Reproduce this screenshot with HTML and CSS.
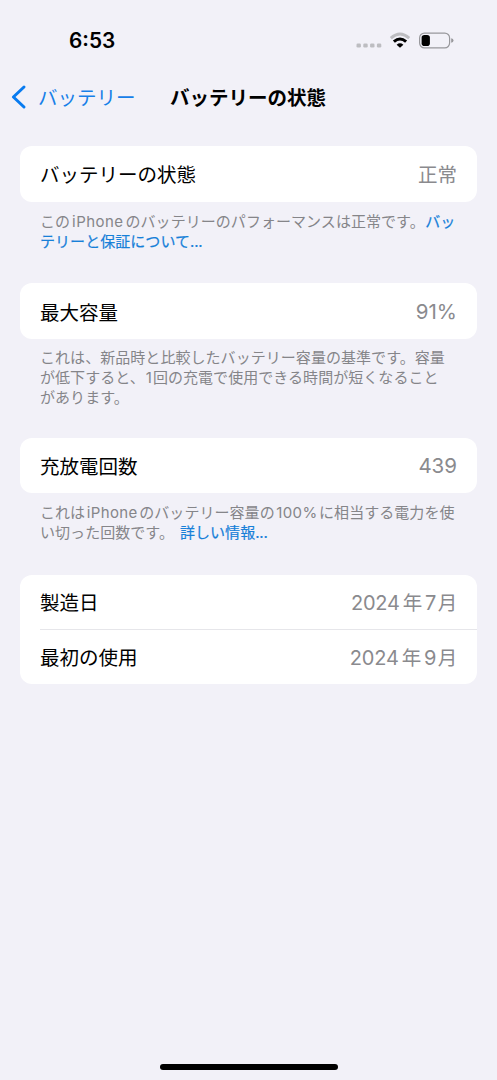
FILE: index.html
```html
<!DOCTYPE html>
<html lang="ja">
<head>
<meta charset="utf-8">
<title>バッテリーの状態</title>
<link rel="stylesheet" href="styles.css">
</head>
<body>
<div class="screen">
  <header class="status">
    <span class="clock">6:53</span>
    <svg class="indicators" width="98" height="20" viewBox="0 0 98 20">
      <g fill="#bdbdc1"><rect x="0.5" y="13.5" width="4.4" height="4" rx="1.3"/><rect x="7.3" y="13.5" width="4.4" height="4" rx="1.3"/><rect x="14.1" y="13.5" width="4.4" height="4" rx="1.3"/><rect x="20.9" y="13.5" width="4.4" height="4" rx="1.3"/></g>
      <path d="M34.8 8.1Q44 -0.1 53.2 8.1" fill="none" stroke="#bdbdc1" stroke-width="2.9"/>
      <path d="M37.9 11.6Q44 6.4 50.1 11.6" fill="none" stroke="#000" stroke-width="3.1"/>
      <path d="M44 17.7L40.6 14.7Q44 11.8 47.4 14.7Z"/>
      <rect x="63.6" y="3.1" width="30" height="14.8" rx="4.8" fill="none" stroke="#98989c" stroke-width="1.2"/>
      <rect x="65.6" y="5" width="8.3" height="11" rx="2.8"/>
      <path d="M95.2 8.2Q97.5 8.8 97.5 10.5T95.2 12.8Z" fill="#98989c"/>
    </svg>
  </header>
  <nav class="nav">
    <svg class="chevron" width="16" height="26" viewBox="0 0 16 26"><path d="M13 3L2.4 13L13 23" fill="none" stroke="#087bf0" stroke-width="3" stroke-linecap="round" stroke-linejoin="round"/></svg>
    <span class="back">バッテリー</span>
    <h1 class="title">バッテリーの状態</h1>
  </nav>
  <main class="groups">
    <section class="group health">
      <div class="card"><div class="row"><span>バッテリーの状態</span><span class="value">正常</span></div></div>
      <p class="note">この<span class="latin">iPhone</span>のバッテリーのパフォーマンスは正常です。<a class="link">バッ<br>テリーと保証について<span class="dots">...</span></a></p>
    </section>
    <section class="group capacity">
      <div class="card"><div class="row"><span>最大容量</span><span class="value">91%</span></div></div>
      <p class="note">これは、新品時と比較したバッテリー容量の基準です。容量<br>が低下すると、<span class="one">1</span>回の充電で使用できる時間が短くなること<br>があります。</p>
    </section>
    <section class="group cycles">
      <div class="card"><div class="row"><span>充放電回数</span><span class="value">439</span></div></div>
      <p class="note">これは<span class="latin">iPhone</span>のバッテリー容量の<span class="latin">100%</span>に相当する電力を使<br>い切った回数です。<a class="link more">詳しい情報<span class="dots">...</span></a></p>
    </section>
    <section class="group dates">
      <div class="card">
        <div class="row"><span>製造日</span><span class="value">2024<span class="kanji">年</span>7<span class="kanji last">月</span></span></div>
        <div class="row"><span>最初の使用</span><span class="value">2024<span class="kanji">年</span>9<span class="kanji last">月</span></span></div>
      </div>
    </section>
  </main>
  <div class="home"></div>
</div>
</body>
</html>
```
FILE: styles.css
```css
* { box-sizing: border-box; }
body { margin: 0; background: #f2f1f8; }
.screen {
  width: 497px;
  height: 1080px;
  display: flex;
  flex-direction: column;
  font-family: Inter, "Noto Sans CJK JP", sans-serif;
  color: #000;
  white-space: nowrap;
}
.status {
  height: 72px;
  padding: 30px 43px 0 69px;
  display: flex;
  justify-content: space-between;
  align-items: flex-start;
}
.clock { font-size: 20.8px; line-height: 22px; font-weight: 600; }
.nav {
  height: 50px;
  padding-left: 11px;
  display: flex;
  align-items: center;
}
.back,
.title { padding-bottom: 2px; }
.back { margin-left: 11px; width: 132px; font-size: 19.5px; color: #1780e8; }
.title { margin: 0; font-size: 19.5px; font-weight: 700; }
.groups { flex: 1; padding: 24px 20px 0; }
.health { height: 137px; }
.capacity { height: 154.5px; }
.cycles { height: 137.5px; }
.card { background: #fff; border-radius: 12px; }
.row {
  height: 55.5px;
  padding: 0 20px;
  display: flex;
  justify-content: space-between;
  align-items: center;
  font-size: 19.5px;
}
.capacity .row { padding-top: 1px; }
.dates .row { height: 53.5px; }
.row + .row {
  margin-left: 20px;
  padding-left: 0;
  border-top: 1px solid #e6e6ea;
}
.dates .row + .row { height: 55.5px; }
.value { color: #8a8a8e; font-size: 20.5px; }
.health .value { font-size: 19.5px; }
.dates .value { font-size: 20px; letter-spacing: -0.2px; }
.dates .kanji { font-size: 19.5px; margin: 0 3px; }
.dates .last { margin: 0 0 0 1.5px; }
.note {
  margin: 10px 0 0 20px;
  font-size: 15px;
  line-height: 20px;
  letter-spacing: 0.05px;
  color: #858589;
}
.capacity .note { margin-top: 9px; }
.latin { margin: 0 2px; letter-spacing: 0.45px; }
.cycles .latin { margin: 0 1.5px; letter-spacing: 0.4px; }
.one { margin: 0 1px; }
.link { color: #1780d8; -webkit-text-stroke: 0.2px #1780d8; }
.health .link { margin-left: 0.5px; }
.link.more { margin-left: 6px; }
.dots { letter-spacing: -0.2px; }
.home {
  align-self: center;
  width: 178px;
  height: 6px;
  margin-bottom: 10px;
  border-radius: 3px;
  background: #000;
}
```
